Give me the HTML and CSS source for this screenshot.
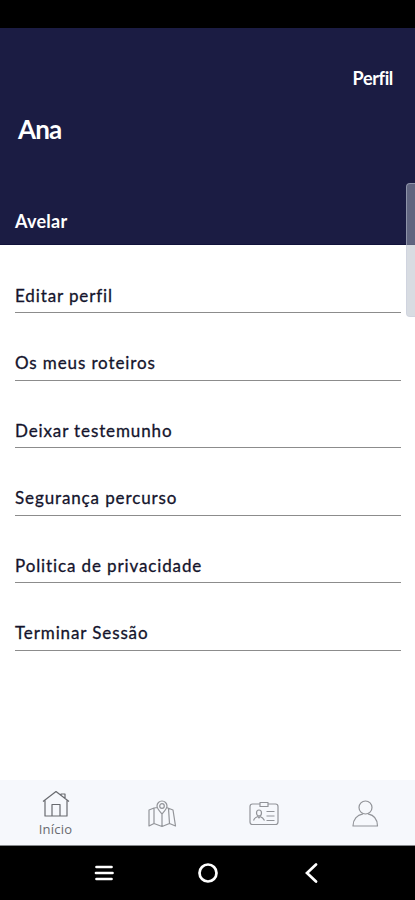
FILE: index.html
```html
<!DOCTYPE html>
<html lang="pt">
<head>
<meta charset="utf-8">
<title>Perfil</title>
<link rel="stylesheet" href="styles.css">
</head>
<body>
<div class="screen">
  <div class="status"></div>
  <header class="header">
    <div class="title"><span>Perfil</span></div>
    <h1 class="name"><span>Ana</span></h1>
    <div class="surname"><span>Avelar</span></div>
  </header>
  <main class="menu">
    <div class="item"><span>Editar perfil</span></div>
    <div class="item"><span>Os meus roteiros</span></div>
    <div class="item"><span>Deixar testemunho</span></div>
    <div class="item"><span>Segurança percurso</span></div>
    <div class="item"><span>Politica de privacidade</span></div>
    <div class="item"><span>Terminar Sessão</span></div>
  </main>
  <nav class="tabs">
    <div class="tab tab-active">
      <svg width="30" height="28" viewBox="0 0 30 28"><path d="M2 11.500L15 1.500L28 11.500M4 10.500V26H26V10.500M11 26V14.500H19V26M20 5V4H24V8.500"/></svg>
      <span>Início</span>
    </div>
    <div class="tab">
      <svg width="30" height="28" viewBox="0 0 30 28"><path d="M10.500 7.500L7 8L2 10V26L7 23.500L15 26.500L22.500 23.500L28.500 26L26 10L19.500 7.500M7 8V23.500M15 14V26.500M21.500 8.500L22.500 23.500M15 14C12 10.500 10 8.500 10 6A5 5 0 0 1 20 6C20 8.500 18 10.500 15 14Z"/><circle cx="15" cy="6" r="2.300"/></svg>
    </div>
    <div class="tab">
      <svg width="30" height="28" viewBox="0 0 30 28"><path d="M11 4H3.500Q1 4 1 6.500V22Q1 24.500 3.500 24.500H26.500Q29 24.500 29 22V6.500Q29 4 26.500 4H19M11 2.500H19V6.500H11ZM17.500 11.500H25.500M17.500 16H25.500M17.500 20.500H25.500M4.500 20.500Q5.500 17.500 9 16.500L10 18L11 16.500Q14 17.500 15.500 20.500"/><ellipse cx="10" cy="13" rx="2.500" ry="3"/></svg>
    </div>
    <div class="tab">
      <svg width="30" height="28" viewBox="0 0 30 28"><circle cx="15.500" cy="7.500" r="6.500"/><path d="M13 13.800C7 15 3 19.500 3 26H27.500C27.500 19.500 24 15 18 13.800"/></svg>
    </div>
  </nav>
  <div class="system">
    <svg width="20" height="20" viewBox="0 0 20 20"><path d="M2.500 4H17.500M2 10H18.500M2.500 16H17.500"/></svg>
    <svg width="20" height="20" viewBox="0 0 20 20"><circle cx="10" cy="10" r="8.500"/></svg>
    <svg width="20" height="20" viewBox="0 0 20 20"><path d="M15 1.500L6 10L15 18.500"/></svg>
  </div>
  <div class="edge-handle"></div>
</div>
</body>
</html>
```
FILE: styles.css
```css
* { box-sizing: border-box; }
body { margin: 0; background: #fff; font-family: Lato, "Liberation Sans", sans-serif; }
.screen { position: relative; width: 415px; height: 900px; overflow: hidden; display: flex; flex-direction: column; }
.status { height: 28px; flex: none; background: #000; }
.header { height: 217px; flex: none; background: #1b1c43; border-bottom: 1px solid #11123a; color: #fff; font-weight: 700; }
.title { padding: 38px 22px 0 0; text-align: right; font-size: 18px; line-height: 24px; letter-spacing: -0.35px; }
.name { margin: 22px 0 0 18px; font-size: 26px; line-height: 34px; letter-spacing: -0.9px; }
.surname { padding: 63px 0 0 15px; font-size: 18px; line-height: 24px; letter-spacing: 0.25px; }
.menu { flex: 1; padding: 0.5px 14px 0 15px; }
.item { height: 67.5px; padding-top: 39px; border-bottom: 1px solid #8c8c8c; color: #14142c; font-size: 17px; line-height: 22px; letter-spacing: 0.88px; white-space: nowrap; -webkit-text-stroke: 0.3px #14142c; }
.tabs { height: 66px; flex: none; background: #f6f8fc; border-bottom: 1px solid #85888b; display: grid; grid-template-columns: 111px 102px 101px 101px; }
.tab { display: flex; flex-direction: column; align-items: center; padding-top: 20px; color: #929499; }
.tab svg { fill: none; stroke: currentColor; stroke-width: 1.2; stroke-linejoin: round; }
.tab-active { padding-top: 10px; color: #686a6f; }
.tab-active span { font-family: "Open Sans", sans-serif; font-size: 13px; line-height: 17px; margin-top: 3px; letter-spacing: 0.2px; }
.system { height: 54px; flex: none; padding: 0 94px; background: #000; display: flex; align-items: center; justify-content: space-between; }
.system svg { fill: none; stroke: #fff; stroke-width: 2.7; stroke-linecap: round; }
.edge-handle { position: absolute; top: 183px; right: -4px; width: 13px; height: 134px; border: 1px solid rgba(200, 204, 220, 0.45); border-radius: 4px; background: rgba(174, 181, 195, 0.48); }
```
